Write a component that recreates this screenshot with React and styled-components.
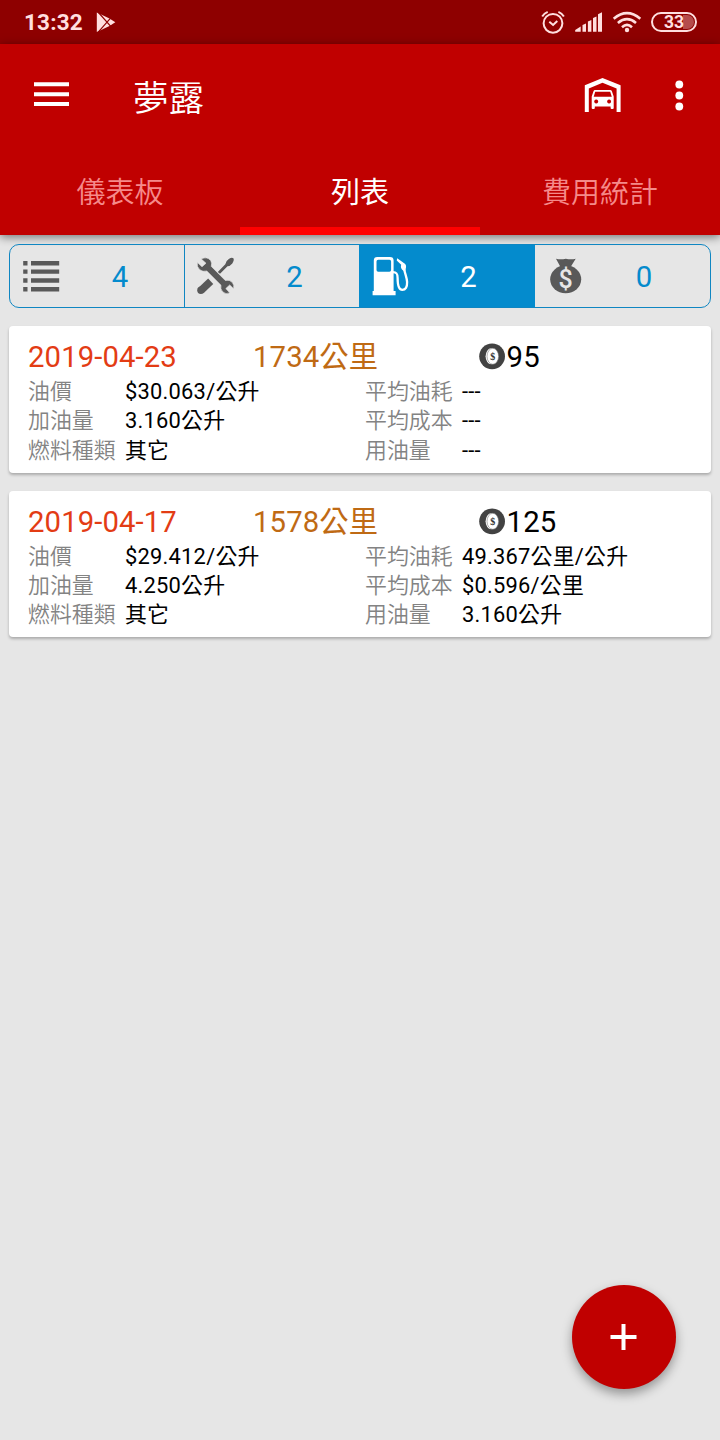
import React from "react";
import styled, { createGlobalStyle, css } from "styled-components";

const colors = {
  statusBar: "#8e0000",
  primary: "#c00000",
  indicator: "#ff0000",
  page: "#e6e6e6",
  accent: "#048bcd",
  accentLine: "#0f86c2",
  icon: "#595959",
  date: "#e33c14",
  mileage: "#bf6a14",
  label: "#838383",
};

const GlobalStyle = createGlobalStyle`
  * { box-sizing: border-box; }
  body {
    margin: 0;
    background: ${colors.page};
    font-family: Roboto, "Noto Sans CJK TC", sans-serif;
  }
`;

const Screen = styled.div`
  position: relative;
  width: 720px;
  height: 1440px;
  overflow: hidden;
  background: ${colors.page};
`;

const Icon = styled.svg`
  display: block;
  flex: none;
`;

const StatusBar = styled.div`
  display: flex;
  align-items: center;
  height: 44px;
  padding: 0 23px 0 24px;
  background: ${colors.statusBar};
  color: #ffdfdf;
`;

const Clock = styled.span`
  width: 72px;
  font-size: 22.5px;
  font-weight: 700;
  letter-spacing: 0.2px;
  line-height: 46px;
`;

const StatusIcons = styled.div`
  display: flex;
  align-items: center;
  margin-left: auto;
`;

const Header = styled.header`
  background: ${colors.primary};
  box-shadow: 0 2px 9px rgba(0, 0, 0, 0.5);
  color: #fff;
`;

const AppBar = styled.div`
  display: flex;
  align-items: center;
  height: 104px;
  padding: 0 32px 0 33px;
`;

const Title = styled.h1`
  flex: 1;
  margin: 0 0 0 63px;
  padding-top: 5px;
  font-size: 35.5px;
  font-weight: 350;
  line-height: 46px;
`;

const Tabs = styled.nav`
  display: grid;
  grid-template-columns: repeat(3, 1fr);
  height: 87px;
`;

const Tab = styled.div`
  height: 87px;
  padding-top: 24px;
  border-bottom: 8px solid ${(p) => (p.$active ? colors.indicator : "transparent")};
  color: ${(p) => (p.$active ? "#fff" : "#f58a8a")};
  font-size: 29px;
  font-weight: ${(p) => (p.$active ? 400 : 350)};
  line-height: 42px;
  text-align: center;
`;

const Content = styled.main`
  display: flex;
  flex-direction: column;
  gap: 18px;
  padding: 9px 9px 0;
`;

const Segments = styled.div`
  display: grid;
  grid-template-columns: 175px 174px 176px 1fr;
  height: 64px;
  overflow: hidden;
  border: 1px solid ${colors.accentLine};
  border-radius: 10px;
`;

const Segment = styled.div`
  display: flex;
  align-items: center;
  padding-left: ${(p) => (p.$active ? 12 : 11)}px;
  color: ${colors.accent};
  ${(p) =>
    p.$divided &&
    css`
      border-right: 1px solid ${colors.accentLine};
    `}
  ${(p) =>
    p.$active &&
    css`
      background: ${colors.accent};
      color: #fff;
    `}
`;

const Count = styled.span`
  flex: 1;
  padding: 2px ${(p) => p.$inset}px 0 20px;
  font-size: 29.3px;
  line-height: 40px;
  text-align: center;
`;

const Card = styled.article`
  height: 146.6px;
  padding: 12px 19px 0;
  border-radius: 4px;
  background: #fff;
  box-shadow: 0 2px 3px rgba(0, 0, 0, 0.26);
`;

const CardHeader = styled.div`
  display: grid;
  grid-template-columns: 225px 225px 1fr;
  height: 39px;
  font-size: 29.3px;
  letter-spacing: 0.1px;
  line-height: 38px;
`;

const Headline = styled.span`
  color: ${(p) => p.$color};
`;

const Price = styled.span`
  display: flex;
  align-items: center;
  height: 38px;
  gap: 0.6px;
  color: #000;
`;

const Details = styled.div`
  display: grid;
  grid-template-columns: 337px 1fr;
`;

const Detail = styled.div`
  display: flex;
  height: 29.4px;
  font-size: 21.9px;
  line-height: 29.4px;
  white-space: nowrap;
`;

const Label = styled.span`
  width: 97px;
  color: ${colors.label};
  font-weight: 350;
`;

const Value = styled.span`
  color: #000;
  letter-spacing: 0.22px;
`;

const AddButton = styled.button`
  position: absolute;
  right: 44px;
  bottom: 51px;
  display: grid;
  place-items: center;
  width: 104px;
  height: 104px;
  padding: 0;
  border: 0;
  border-radius: 50%;
  background: ${colors.primary};
  box-shadow: 0 5px 11px rgba(0, 0, 0, 0.36);
`;

const PlayIcon = () => (
  <Icon width="21" height="22" viewBox="96 11 21 22">
    <path d="M96.800 12.500 109.500 18.500 115.300 22.200 109.500 25.900 96.800 32Z" fill="#ffdfdf" />
    <path d="M98 12 111 26.700M98 32.400 111 17.700" stroke={colors.statusBar} strokeWidth="1.200" />
  </Icon>
);

const AlarmIcon = () => (
  <Icon width="33" height="26" viewBox="541 9 33 26" fill="none" stroke="#ffdfdf" strokeWidth="2">
    <circle cx="553" cy="23.300" r="9.400" />
    <path d="M542.200 16.600Q544 13.400 547.700 11.900M558.400 11.900Q562 13.400 563.900 16.600" />
    <path d="m549.300 21.700 3.800 3.300 4.200-3.900" />
  </Icon>
);

const SignalIcon = () => (
  <Icon width="38" height="26" viewBox="574 9 38 26" fill="#ffdfdf">
    <path d="M575.200 31.700v-1.700l5.500-3.600v5.300ZM582.500 31.700v-6.700l3.500-1.500v8.200ZM587.900 31.700v-10.300l3.500-1.500v11.800ZM593 31.700V18l3.500-1.600v15.300ZM598 31.700V14.200l4-1.900v19.400Z" />
  </Icon>
);

const WifiIcon = () => (
  <Icon width="39" height="26" viewBox="612 9 39 26" fill="none" stroke="#ffdfdf" strokeWidth="2.600">
    <path d="M613.700 18.700Q627 7.700 640.300 18.700M617.900 23Q627 15.300 636 23M622 27.200Q627 22.700 632 27.200" />
    <circle cx="627" cy="30" r="2.200" fill="#ffdfdf" stroke="none" />
  </Icon>
);

const Battery = styled.span`
  width: 46px;
  height: 20px;
  padding: 1px;
  border: 2px solid #ffdfdf;
  border-radius: 10px;
  background: linear-gradient(90deg, transparent 29px, #b54c4c 29px) content-box;
  font-size: 17.5px;
  font-weight: 700;
  line-height: 15px;
  text-align: center;
`;

const MenuIcon = () => (
  <Icon width="37" height="30" viewBox="33 81 37 30" fill="#fff">
    <path d="M34 82.300h35v4H34zM34 92.200h35v4H34zM34 102h35v4H34z" />
  </Icon>
);

const GarageIcon = () => (
  <Icon width="40" height="38" viewBox="583 77 40 38">
    <path d="M584.800 112V85.200L602.500 78l18.100 7.200V112h-4V88.600L602.500 82.800l-13.700 5.800V112Z" fill="#fff" />
    <path
      fill="#fff"
      fillRule="evenodd"
      d="M595 90h15.100q1.400 0 1.800 1.200l1.800 5.300v11.600q0 1-1 1h-1.100q-1 0-1-1v-1.500h-15.800v1.500q0 1-1 1h-1q-1.100 0-1.100-1V96.500l1.800-5.300Q593.900 90 595 90ZM595.200 91.700l-1.500 5h18.100l-1.600-5ZM596.200 99.600a2 2 0 1 0 .01 0ZM609.100 99.600a2 2 0 1 0 .01 0Z"
    />
  </Icon>
);

const MoreIcon = styled(Icon)`
  margin-left: 47px;
`;

const ListIcon = () => (
  <Icon width="40" height="40" viewBox="21 256 40 40" fill={colors.icon}>
    {[261, 269.4, 278.3, 287].map((y) => (
      <path key={y} d={`M23.2 ${y}h4.3v4.4h-4.3zM31 ${y}h28.2v4.4H31z`} />
    ))}
  </Icon>
);

const ToolsIcon = () => (
  <Icon width="40" height="40" viewBox="196 256 40 40">
    <path
      d="M217.800 271.900 225.300 264.300Q225.600 260.900 228.800 258.900Q231.800 257.200 233.400 258.300Q234.500 260.300 232.300 263.400Q230.200 266 227.500 266.300L220 273.700Z"
      fill={colors.icon}
    />
    <path d="m201.200 290.200 9.500-9" stroke={colors.icon} strokeWidth="7.400" />
    <circle cx="200.900" cy="290.300" r="3.700" fill={colors.icon} />
    <path
      d="M201.300 259.100Q207 256 210.700 260.600Q212.300 263.200 211.300 266.400L225.300 280.500Q229.700 279.300 232.400 282.600Q234.500 285.100 233.700 288.800L229.700 284.900 225.800 288.600 229.700 292.800Q225.900 294.900 222.700 291.800Q220.100 289 221 285.200L206.800 271Q202.900 272.100 199.800 269.700Q196.400 266.700 197.500 262.600L202 266.800 206 263.200Z"
      fill={colors.icon}
      stroke={colors.page}
      strokeWidth="0.600"
    />
  </Icon>
);

const PumpIcon = () => (
  <Icon width="40" height="42" viewBox="372 255 40 42">
    <path
      fill="#fff"
      fillRule="evenodd"
      d="M374.800 291V260.500q0-3.400 3.500-3.400H391q3.600 0 3.600 3.400V291h2v4.300h-23V291ZM379.200 259.700q-1.700 0-1.700 1.700V270q0 1.700 1.700 1.700h11.200q1.700 0 1.700-1.700v-8.600q0-1.700-1.700-1.700Z"
    />
    <path
      d="M394 272.200c4 0 4.600 2 4.600 5.800 0 7.500 1.300 11.800 4.700 11.800 3.200 0 5-2.800 4.800-7.800-.2-4.500-2-7.700-2.800-12.300"
      fill="none"
      stroke="#fff"
      strokeWidth="2.300"
    />
    <path d="m398.200 258.300 7.700 5.500q1.300 1 1.200 3l-.7 4h-2q-3.400-2.600-2.200-6l-4.500-4.300Z" fill="#fff" />
  </Icon>
);

const BagText = styled.text`
  font: 500 25px Roboto, sans-serif;
  text-anchor: middle;
`;

const MoneyBagIcon = () => (
  <Icon width="40" height="40" viewBox="546 256 40 40">
    <path d="M556 258.800q4.500 1 9.800 0 5.300 1 9.900 0l-5.700 9.200h-9Z" fill={colors.icon} />
    <ellipse cx="565.700" cy="279.300" rx="15.500" ry="14" fill={colors.icon} />
    <BagText x="565.600" y="288.200" fill={colors.page}>$</BagText>
  </Icon>
);

const CoinText = styled.text`
  font: 700 10px "Liberation Serif", serif;
  text-anchor: middle;
`;

const CoinIcon = () => (
  <Icon width="28" height="28" viewBox="0 0 28 28">
    <circle cx="14.100" cy="13.300" r="12.900" fill="#424242" />
    <ellipse cx="13.200" cy="13.300" rx="5.600" ry="8" fill="#fff" />
    <ellipse cx="14.800" cy="13.300" rx="5.800" ry="8" fill="#fff" stroke="#777" strokeWidth="0.600" />
    <CoinText x="14.800" y="16.600" fill="#333">$</CoinText>
  </Icon>
);

const segments = [
  { key: "all", count: 4, Glyph: ListIcon, divided: true, inset: 25 },
  { key: "repair", count: 2, Glyph: ToolsIcon, inset: 26 },
  { key: "fuel", count: 2, Glyph: PumpIcon, active: true, inset: 29 },
  { key: "expense", count: 0, Glyph: MoneyBagIcon, inset: 28 },
];

const records = [
  {
    date: "2019-04-23",
    mileage: "1734公里",
    price: "95",
    details: [
      ["油價", "$30.063/公升"],
      ["平均油耗", "---"],
      ["加油量", "3.160公升"],
      ["平均成本", "---"],
      ["燃料種類", "其它"],
      ["用油量", "---"],
    ],
  },
  {
    date: "2019-04-17",
    mileage: "1578公里",
    price: "125",
    details: [
      ["油價", "$29.412/公升"],
      ["平均油耗", "49.367公里/公升"],
      ["加油量", "4.250公升"],
      ["平均成本", "$0.596/公里"],
      ["燃料種類", "其它"],
      ["用油量", "3.160公升"],
    ],
  },
];

export default function App() {
  return (
    <Screen lang="zh-Hant">
      <GlobalStyle />
      <StatusBar>
        <Clock>13:32</Clock>
        <PlayIcon />
        <StatusIcons>
          <AlarmIcon />
          <SignalIcon />
          <WifiIcon />
          <Battery>33</Battery>
        </StatusIcons>
      </StatusBar>
      <Header>
        <AppBar>
          <MenuIcon />
          <Title>夢露</Title>
          <GarageIcon />
          <MoreIcon width="18" height="34" viewBox="670 79 18 34" fill="#fff">
            <circle cx="679.300" cy="84.500" r="3.900" />
            <circle cx="679.300" cy="95.500" r="3.900" />
            <circle cx="679.300" cy="106.500" r="3.900" />
          </MoreIcon>
        </AppBar>
        <Tabs>
          <Tab>儀表板</Tab>
          <Tab $active>列表</Tab>
          <Tab>費用統計</Tab>
        </Tabs>
      </Header>
      <Content>
        <Segments>
          {segments.map(({ key, count, Glyph, divided, active, inset }) => (
            <Segment key={key} $divided={divided} $active={active}>
              <Glyph />
              <Count $inset={inset}>{count}</Count>
            </Segment>
          ))}
        </Segments>
        {records.map((r) => (
          <Card key={r.date}>
            <CardHeader>
              <Headline $color={colors.date}>{r.date}</Headline>
              <Headline $color={colors.mileage}>{r.mileage}</Headline>
              <Price>
                <CoinIcon />
                {r.price}
              </Price>
            </CardHeader>
            <Details>
              {r.details.map(([label, value]) => (
                <Detail key={label}>
                  <Label>{label}</Label>
                  <Value>{value}</Value>
                </Detail>
              ))}
            </Details>
          </Card>
        ))}
      </Content>
      <AddButton aria-label="新增">
        <Icon width="28" height="28" viewBox="0 0 28 28">
          <path d="M13.500 1v26M.500 14h26" stroke="#fff" strokeWidth="4" />
        </Icon>
      </AddButton>
    </Screen>
  );
}
